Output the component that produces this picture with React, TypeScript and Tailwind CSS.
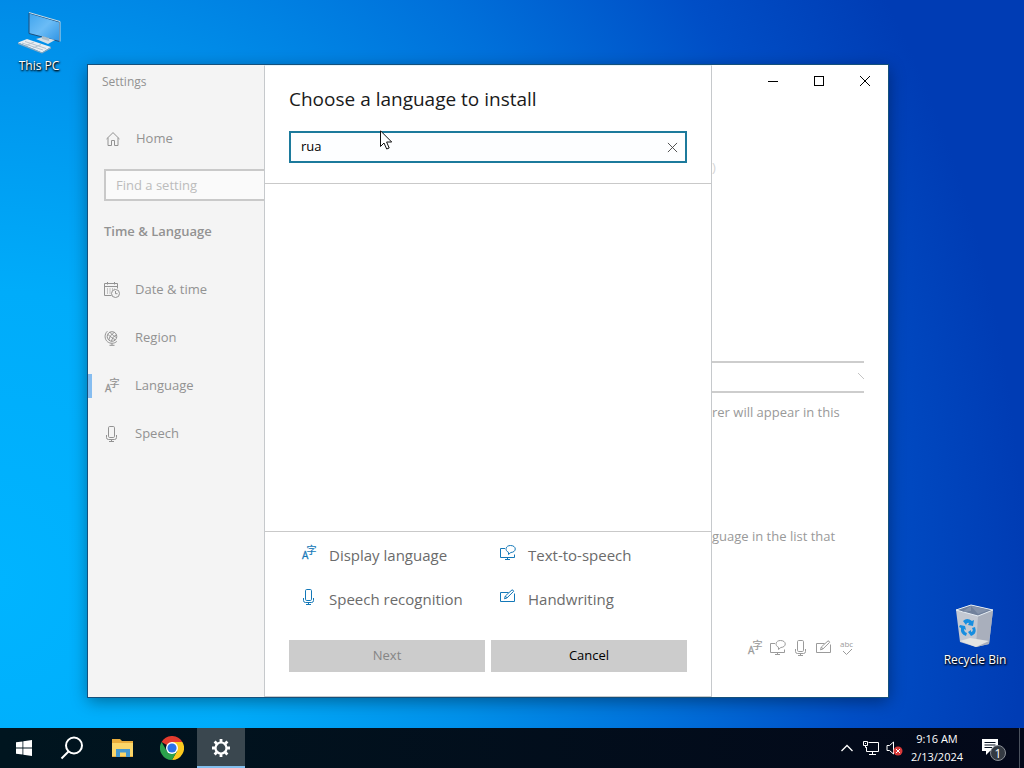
import { useState } from "react";
import type { ReactNode } from "react";

type IconProps = { className?: string };

function HomeIcon({ className }: IconProps) {
  return (
    <svg viewBox="0 0 16 16" className={className} fill="none" stroke="currentColor">
      <path d="M1.500 8 8 1.600 14.500 8M3 6.800V14.500H6.500V9.500H9.500V14.500H13V6.800" />
    </svg>
  );
}

function DateTimeIcon({ className }: IconProps) {
  return (
    <svg viewBox="0 0 16 16" className={className} fill="none" stroke="currentColor">
      <path d="M7.500 13.500H.5V1.500H13.500V6.500M.5 4.500H13.500M3.500 0V2.500M10.500 0V2.500" />
      <path d="M3 7H11M3 9H8M3 11H7" strokeDasharray="1 1.500" />
      <circle cx="11.500" cy="11.500" r="4" />
      <path d="M11.500 9V11.700H13.500" />
    </svg>
  );
}

function RegionIcon({ className }: IconProps) {
  return (
    <svg viewBox="0 0 16 16" className={className} fill="none" stroke="currentColor">
      <circle cx="8" cy="6.500" r="4.800" />
      <path d="M3.800 4.300C6 6.500 9.500 9 11.500 9.800M5.800 2.200C8 4.500 11 7 12.700 7.500M10.500 2.300C8 3.500 5 7.500 4.800 10M12.500 4.800C10 5.500 8 8.500 7.500 11.200" />
      <path d="M3.400 1.200C.2 4 .4 9.500 3.600 11.800 6.300 13.900 10.400 13.700 12.800 11.400M8 13.300V15M5.500 15.300H10.500" />
    </svg>
  );
}

function LanguageIcon({ className }: IconProps) {
  return (
    <svg viewBox="0 0 16 16" className={className} overflow="visible" fill="currentColor" aria-hidden="true">
      <text x="1" y="14" fontSize="10" fontFamily="Open Sans, sans-serif" stroke="currentColor" strokeWidth=".3">A</text>
      <text x="5.500" y="8.500" fontSize="10" fontFamily="Noto Sans CJK SC, sans-serif" stroke="currentColor" strokeWidth=".2">字</text>
    </svg>
  );
}

function MicIcon({ className }: IconProps) {
  return (
    <svg viewBox="0 0 16 16" className={className} fill="none" stroke="currentColor">
      <rect x="4.500" y=".5" width="6" height="11" rx="1.200" />
      <path d="M2.500 9V11.500Q2.500 13.500 4.500 13.500H10.500Q12.500 13.500 12.500 11.500V9M7.500 13.500V15.500M5 15.500H10" />
    </svg>
  );
}

function TextToSpeechIcon({ className }: IconProps) {
  return (
    <svg viewBox="0 0 16 16" className={className} fill="none" stroke="currentColor">
      <path d="M5 3.500H.5V12.500H14.500V9.500M7.500 12.500V14.500M5 14.500H10" />
      <path d="M8.500 9.500V7.300C4.500 5.500 5.500.5 10.500.5 16.800.5 16.800 7.300 10.800 7.500Z" />
    </svg>
  );
}

function HandwritingIcon({ className }: IconProps) {
  return (
    <svg viewBox="0 0 16 16" className={className} fill="none" stroke="currentColor">
      <path d="M8.500 3.500H.5V12.500H14.500V4.500" />
      <path d="M4.500 9.800 5.300 7 12 .9Q13.300 .7 13.600 2.400L7 8.900ZM5.300 7 7 8.900" />
    </svg>
  );
}

function SpellcheckIcon({ className }: IconProps) {
  return (
    <svg viewBox="0 0 16 16" className={className} overflow="visible" aria-hidden="true">
      <text x="1" y="7" fontSize="8" fontFamily="Open Sans, sans-serif" fill="currentColor">abc</text>
      <path d="M4 11 7.500 14.500 13 9" fill="none" stroke="currentColor" />
    </svg>
  );
}

function CloseIcon({ className }: IconProps) {
  return (
    <svg viewBox="0 0 12 12" className={className} fill="none" stroke="currentColor">
      <path d="M1 1 11 11M11 1 1 11" />
    </svg>
  );
}

function ThisPcIcon() {
  return (
    <svg viewBox="0 0 48 48" className="h-12 w-12">
      <defs>
        <linearGradient id="screen" x1="0" y1="0" x2="1" y2="1">
          <stop offset="0" stopColor="#3fa4ee" />
          <stop offset=".5" stopColor="#6bbcf6" />
          <stop offset="1" stopColor="#2f94e4" />
        </linearGradient>
      </defs>
      <path d="M14 5 44.500 14V33.500L14 25.500Z" fill="url(#screen)" stroke="#1d4f7c" />
      <path d="M14 4.500 45 13.500V33.500" fill="none" stroke="#c8dce8" />
      <path d="M21 31 28 29 40 32 33 36Z" fill="#d5e0e8" />
      <path d="M27 28 34 30V33L27 31Z" fill="#aebfca" />
      <path d="M3 34.500 12 31 36 39 27 44.500Z" fill="#e9eef2" />
      <path d="M27 44.500 36 39V40.500L27 45.500 3 36V34.500Z" fill="#8fa9bd" />
      <path d="M7 35 28 42M10 33.500 31 40.500M11 37.500 19 34M18 40 26 36.500" stroke="#b3c4d1" fill="none" />
    </svg>
  );
}

function RecycleBinIcon() {
  return (
    <svg viewBox="0 0 48 48" className="h-12 w-12">
      <path d="M5 8 20 3 42 8 38 42 25 45 9 40Z" fill="#c3c8d2" />
      <path d="M27 14 42 8 38 42 25 45Z" fill="#a9afbc" />
      <path d="M5 8 20 3 42 8 27 14Z" fill="#71819c" stroke="#e6edf4" />
      <path d="M20 4V9L11 10ZM20 4 38 8 27 12Z" fill="#8593ab" />
      <path d="M9 39 19 36 38 39 25 45Z" fill="#e4e4e2" />
      <g fill="#168ee0">
        <path d="M12 19Q16 15 21 19L23 18 22 24 17 23 18 21Q16 20 15 23Z" />
        <path d="M21 26 24 25Q26 31 22 33L20 34 17 30 20 28V30Q23 29 21 26Z" />
        <path d="M9 23 14 24 15 28 13 27Q13 30 16 31L15 34Q9 32 10 26L8 25Z" />
      </g>
    </svg>
  );
}

const navItems = [
  { label: "Date & time", icon: DateTimeIcon },
  { label: "Region", icon: RegionIcon },
  { label: "Language", icon: LanguageIcon, active: true },
  { label: "Speech", icon: MicIcon },
];

const features = [
  { label: "Display language", icon: LanguageIcon },
  { label: "Text-to-speech", icon: TextToSpeechIcon },
  { label: "Speech recognition", icon: MicIcon },
  { label: "Handwriting", icon: HandwritingIcon },
];

function Sidebar() {
  return (
    <aside className="w-[176px] shrink-0 overflow-hidden bg-[#f4f4f4] text-[13px] text-[#929292]">
      <div className="flex h-[34px] items-center pl-3.5 text-xs">Settings</div>
      <a href="#home" className="mt-4 flex h-12 items-center gap-[15px] pl-[17px]">
        <HomeIcon className="h-4 w-4" />
        Home
      </a>
      <div className="mt-1.5 pl-4">
        <input
          type="text"
          aria-label="Find a setting"
          placeholder="Find a setting"
          className="block h-8 w-full border-2 border-r-0 border-[#c9c9c9] bg-[#fafafa] px-2.5 outline-none placeholder:text-[#bcbcbc]"
        />
      </div>
      <h2 className="mt-4 h-7 pl-4 font-semibold leading-7">Time &amp; Language</h2>
      <nav className="mt-[21px]">
        {navItems.map(({ label, icon: Icon, active }) => (
          <a key={label} href={`#${label}`} className="flex h-12 items-center">
            <span className={active ? "h-6 w-1 bg-[#86bdf0]" : "h-6 w-1"} />
            <Icon className="ml-3 h-4 w-4" />
            <span className="ml-[15px]">{label}</span>
          </a>
        ))}
      </nav>
    </aside>
  );
}

function LanguageDialog() {
  const [query, setQuery] = useState("rua");

  return (
    <section
      role="dialog"
      aria-labelledby="dialog-title"
      className="flex min-w-0 flex-1 flex-col border border-[#c6c9cc] border-t-[#e5f3fa] bg-white"
    >
      <div className="border-b border-[#c9c9c9] px-6 pb-5 pt-[21px]">
        <h1 id="dialog-title" className="text-[19px] leading-6 text-[#1a1a1a]">
          Choose a language to install
        </h1>
        <div className="mt-5 flex h-8 items-center border-2 border-[#1c7a9c] bg-[#fdfeff]">
          <input
            type="text"
            aria-label="Search languages"
            value={query}
            onChange={(e) => setQuery(e.target.value)}
            className="min-w-0 flex-1 bg-transparent px-2.5 text-[13px] text-black outline-none"
          />
          <button aria-label="Clear" className="flex w-[26px] justify-center text-[#444]" onClick={() => setQuery("")}>
            <CloseIcon className="h-[11px] w-[11px]" />
          </button>
        </div>
      </div>
      <div className="flex-1" />
      <div className="border-t border-[#c9c9c9] px-6 pb-6">
        <ul className="grid grid-cols-2 pt-px">
          {features.map(({ label, icon: Icon }) => (
            <li key={label} className="flex h-11 items-center gap-3 whitespace-nowrap pl-3 text-[15px] text-[#6b6b6b]">
              <Icon className="mb-1 h-4 w-4 shrink-0 text-[#1478b8]" />
              {label}
            </li>
          ))}
        </ul>
        <div className="mt-[19px] grid grid-cols-2 gap-1.5 text-[13px]">
          <button disabled className="h-8 bg-[#cccccc] text-[#858585]">Next</button>
          <button className="h-8 bg-[#cccccc] text-black">Cancel</button>
        </div>
      </div>
    </section>
  );
}

function LanguagePage() {
  return (
    <div className="w-[176px] shrink-0 overflow-hidden text-[13px] leading-5 text-[#999]">
      <div className="flex h-8 justify-end text-black">
        <button aria-label="Minimize" className="flex w-[46px] items-center justify-center">
          <svg viewBox="0 0 10 10" className="h-2.5 w-2.5" stroke="currentColor">
            <path d="M0 5.500H10" />
          </svg>
        </button>
        <button aria-label="Maximize" className="flex w-[46px] items-center justify-center">
          <svg viewBox="0 0 10 10" className="h-2.5 w-2.5" fill="none" stroke="currentColor">
            <rect x=".5" y=".5" width="9" height="9" />
          </svg>
        </button>
        <button aria-label="Close" className="flex w-[46px] items-center justify-center">
          <CloseIcon className="h-3 w-3" />
        </button>
      </div>
      <div className="mt-[60px] h-5 text-[#d5d5d5]">)</div>
      <div className="relative mr-6 mt-[184px]">
        <select
          aria-label="Windows display language"
          className="block h-8 w-full appearance-none border-y-2 border-[#cdcdcd] bg-white outline-none"
        >
          <option value="" />
        </select>
        <svg viewBox="0 0 6 6" className="pointer-events-none absolute right-0 top-3 h-1.5 w-1.5" stroke="#c4c4c4">
          <path d="M0 0 6 6" />
        </svg>
      </div>
      <p className="mt-[9px]">rer will appear in this</p>
      <p className="mt-[104px]">guage in the list that</p>
      <div className="mt-[94px] flex justify-end gap-[7px] pr-[33px] text-[#9b9b9b]">
        <LanguageIcon className="h-4 w-4" />
        <TextToSpeechIcon className="h-4 w-4" />
        <MicIcon className="h-4 w-4" />
        <HandwritingIcon className="h-4 w-4" />
        <SpellcheckIcon className="h-4 w-4" />
      </div>
    </div>
  );
}

function DesktopIcon({ label, children }: { label: string; children: ReactNode }) {
  return (
    <button className="flex w-[76px] flex-col items-center text-xs leading-4 text-white [text-shadow:1px_1px_2px_#000,0_1px_2px_#000]">
      {children}
      <span className="mt-0.5 whitespace-nowrap">{label}</span>
    </button>
  );
}

function Taskbar() {
  return (
    <footer className="flex h-10 shrink-0 items-stretch bg-linear-to-r from-[#00151f] to-[#030819] text-white">
      <button aria-label="Start" className="flex w-12 items-center justify-center">
        <svg viewBox="0 0 16 16" className="h-4 w-4" fill="currentColor">
          <path d="M0 2.300 6.500 1.400V7.600H0ZM7.300 1.300 16 0V7.600H7.300ZM0 8.400H6.500V14.600L0 13.700ZM7.300 8.400H16V16L7.300 14.700Z" />
        </svg>
      </button>
      <button aria-label="Search" className="flex w-12 items-center justify-center">
        <svg viewBox="0 0 24 24" className="h-6 w-6" fill="none" stroke="currentColor" strokeWidth="2">
          <circle cx="14" cy="9.500" r="8" />
          <path d="M8.500 15.500 1.500 22.500" />
        </svg>
      </button>
      <div className="ml-[3px] flex gap-px">
        <button aria-label="File Explorer" className="flex w-12 items-center justify-center">
          <svg viewBox="0 0 24 24" className="h-6 w-6">
            <path d="M1 3H9L11 5H22V21H1Z" fill="#e9ad3c" />
            <path d="M1 7H22V20H1Z" fill="#fbd669" />
            <path d="M5 13H19V21H15V16.500H9V21H5Z" fill="#4598cf" />
          </svg>
        </button>
        <button aria-label="Google Chrome" className="flex w-12 items-center justify-center">
          <svg viewBox="0 0 24 24" className="h-6 w-6">
            <path d="M12 12 1.600 6A12 12 0 0 1 22.400 6Z" fill="#e33b2e" />
            <path d="M12 12V6H22.400A12 12 0 0 1 12 24L17.200 15Z" fill="#fcc91f" />
            <path d="M12 12 17.200 15 12 24A12 12 0 0 1 1.600 6L6.800 15Z" fill="#2ba24c" />
            <circle cx="12" cy="12" r="6" fill="#fff" />
            <circle cx="12" cy="12" r="4.600" fill="#2a72e8" />
          </svg>
        </button>
        <button
          aria-label="Settings"
          className="flex w-12 items-center justify-center border-b-2 border-[#83bfee] bg-[#3a474f] pt-0.5"
        >
          <svg viewBox="0 0 20 20" className="h-5 w-5" fill="none" stroke="currentColor">
            <circle cx="10" cy="10" r="5.500" strokeWidth="2.200" />
            <path
              d="M10 1V4.500M10 15.500V19M1 10H4.500M15.500 10H19M3.600 3.600 6 6M14 14 16.400 16.400M3.600 16.400 6 14M14 6 16.400 3.600"
              strokeWidth="2.800"
            />
          </svg>
        </button>
      </div>
      <div className="ml-auto flex items-center">
        <button aria-label="Show hidden icons">
          <svg viewBox="0 0 12 12" className="h-3 w-3" fill="none" stroke="currentColor" strokeWidth="1.300">
            <path d="M.5 9 6 3.500 11.500 9" />
          </svg>
        </button>
        <button aria-label="Network" className="ml-2.5">
          <svg viewBox="0 0 16 16" className="h-4 w-4" fill="none" stroke="currentColor">
            <path d="M5.500 2.500H15.500V11.500H3.500V7M9.500 11.500V14.500M6 14.500H13" />
            <path d="M.5 1.500H4.500V5.500H.5ZM2.500 5.500V7.500H4M2 3.500H3" />
          </svg>
        </button>
        <button aria-label="Volume muted" className="ml-[7px]">
          <svg viewBox="0 0 18 16" className="h-4 w-[18px]">
            <path d="M1 5.500H3.500L7.500 2V14L3.500 10.500H1Z" fill="none" stroke="currentColor" />
            <circle cx="12" cy="11" r="4.500" fill="#d93a3a" />
            <path d="M10 9 14 13M14 9 10 13" stroke="#fff" />
          </svg>
        </button>
        <button className="w-[66px] text-center text-[11px] leading-[18px]">
          9:16 AM
          <br />
          2/13/2024
        </button>
        <button aria-label="1 new notification" className="ml-[11px] mr-3">
          <svg viewBox="0 0 26 26" className="h-[26px] w-[26px]">
            <path d="M1 4H17V16H9L5 20V16H1Z" fill="#fff" />
            <path d="M3.500 7.500H14.500M3.500 10H14.500M3.500 12.500H11" stroke="#061020" />
            <circle cx="17" cy="18" r="7.500" fill="#343a42" stroke="#8a8f96" />
            <text x="17" y="22.500" textAnchor="middle" fontSize="12" fill="#fff">1</text>
          </svg>
        </button>
        <div className="mr-1 h-full w-px bg-[#4b525e]" />
      </div>
    </footer>
  );
}

export default function App() {
  return (
    <div className="flex h-screen flex-col overflow-hidden font-['Open_Sans','Noto_Sans_CJK_SC',sans-serif]">
      <main className="relative min-h-0 flex-1 bg-[radial-gradient(100%_160%_at_0%_80%,#00b4ff_0%,#00acfa_25%,#0090ea_47%,#0070da_66%,#004ec6_84%,#003cb4_100%)]">
        <div className="absolute left-px top-2">
          <DesktopIcon label="This PC">
            <ThisPcIcon />
          </DesktopIcon>
        </div>
        <div className="absolute bottom-[60px] right-[11px]">
          <DesktopIcon label="Recycle Bin">
            <RecycleBinIcon />
          </DesktopIcon>
        </div>
        <div className="absolute bottom-[31px] left-[88px] right-[136px] top-[65px] flex bg-white shadow-[0_4px_16px_rgba(0,0,0,0.4)] outline outline-[#14507c]">
          <Sidebar />
          <LanguageDialog />
          <LanguagePage />
        </div>
        <svg viewBox="0 0 13 20" className="pointer-events-none absolute left-[380px] top-[130px] h-5 w-[13px]">
          <path d="M.5 .8V16.500L4 13 6.700 19 9.200 18 6.600 12H11.700Z" fill="#fff" stroke="#111" />
        </svg>
      </main>
      <Taskbar />
    </div>
  );
}
